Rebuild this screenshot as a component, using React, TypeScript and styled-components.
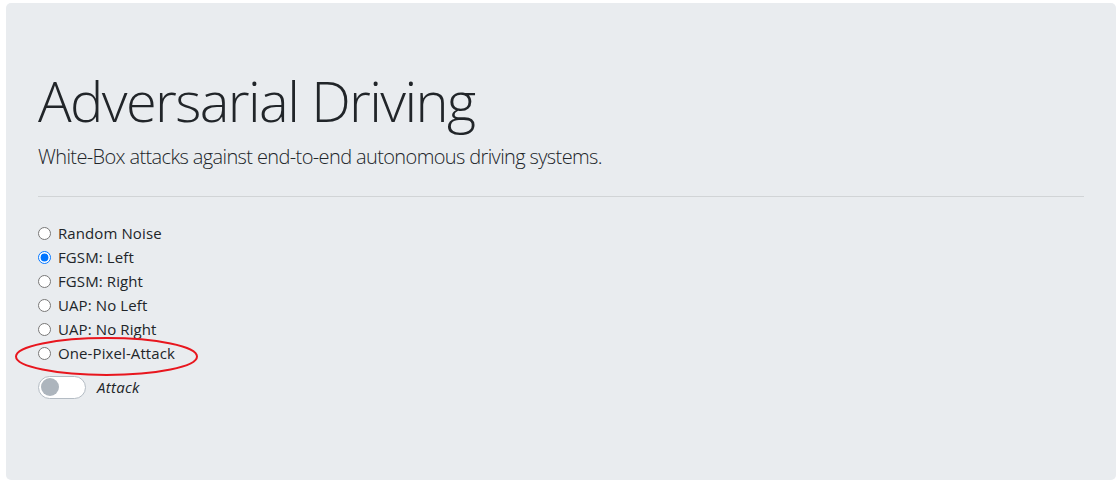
import styled, { createGlobalStyle } from "styled-components";

const GlobalStyle = createGlobalStyle`
  html, body {
    margin: 0;
    padding: 0;
    background: #fff;
  }
  body {
    font-family: "Open Sans", "Noto Sans", sans-serif;
    color: #212529;
    font-size: 16px;
    line-height: 1.5;
  }
  * {
    box-sizing: border-box;
  }
`;

const Page = styled.div`
  padding: 3px 4px 5px 6px;
`;

const Jumbotron = styled.div`
  background-color: #e9ecef;
  border-radius: 5px;
  padding: 64px 32px 65px;
  position: relative;
`;

const Title = styled.h1`
  font-size: 56px;
  font-weight: 300;
  line-height: 1.2;
  margin: 0 0 8px;
  letter-spacing: -1.6px;
`;

const Lead = styled.p`
  font-size: 20px;
  font-weight: 300;
  margin: 0;
  letter-spacing: -0.62px;
`;

const Divider = styled.hr`
  margin: 24px 0;
  border: 0;
  border-top: 1px solid rgba(0, 0, 0, 0.1);
`;

const Form = styled.form`
  margin: 0 0 16px;
`;

const Check = styled.label`
  display: flex;
  align-items: center;
  height: 24px;
  font-size: 15px;
  letter-spacing: 0.1px;
`;

const Radio = styled.input`
  width: 13px;
  height: 13px;
  margin: 0 7px 0 0;
  accent-color: #0075ff;
`;

const SwitchRow = styled.label`
  display: flex;
  align-items: center;
  gap: 11px;
  margin-top: 10px;
  height: 24px;
  font-size: 15px;
  font-style: italic;
  letter-spacing: 0.3px;
`;

const Track = styled.span<{ on: boolean }>`
  width: 48px;
  height: 23px;
  border-radius: 12px;
  border: 1px solid #b4bcc4;
  background: ${(p) => (p.on ? "#007bff" : "#fff")};
  display: flex;
  align-items: center;
  padding: 0 2px;
  justify-content: ${(p) => (p.on ? "flex-end" : "flex-start")};
`;

const Knob = styled.span<{ on: boolean }>`
  width: 18px;
  height: 18px;
  border-radius: 50%;
  background: ${(p) => (p.on ? "#fff" : "#adb5bd")};
`;

const Annotation = styled.svg`
  position: absolute;
  left: 8px;
  top: 334px;
  pointer-events: none;
`;

const attacks = [
  "Random Noise",
  "FGSM: Left",
  "FGSM: Right",
  "UAP: No Left",
  "UAP: No Right",
  "One-Pixel-Attack",
];

const App = () => {
  const selected = "FGSM: Left";
  const attacking = false;
  return (
    <Page>
      <GlobalStyle />
      <Jumbotron>
        <Title>Adversarial Driving</Title>
        <Lead>White-Box attacks against end-to-end autonomous driving systems.</Lead>
        <Divider />
        <Form>
          {attacks.map((a) => (
            <Check key={a}>
              <Radio type="radio" name="attack" defaultChecked={a === selected} />
              {a}
            </Check>
          ))}
          <SwitchRow>
            <Track on={attacking}>
              <Knob on={attacking} />
            </Track>
            Attack
          </SwitchRow>
        </Form>
        <Annotation width="190" height="44" viewBox="0 0 190 44">
          <ellipse cx="92.5" cy="19.5" rx="90.5" ry="18.5" fill="none" stroke="#e8161e" strokeWidth="2" />
        </Annotation>
      </Jumbotron>
    </Page>
  );
};

export default App;
